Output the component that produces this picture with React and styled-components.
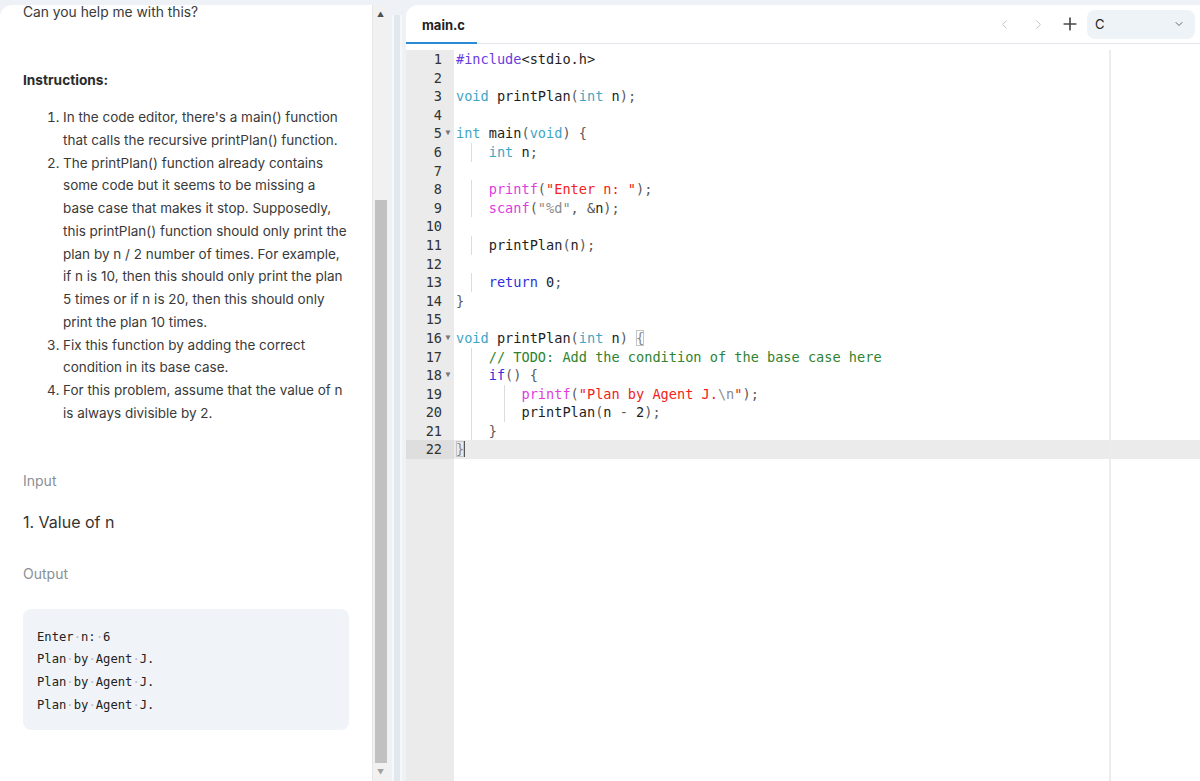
import styled, { createGlobalStyle } from "styled-components";
import { ChevronLeft, ChevronRight, ChevronDown, Plus } from "lucide-react";

const GlobalStyle = createGlobalStyle`
  html, body {
    margin: 0;
    padding: 0;
    background: #eef2f6;
    overflow: hidden;
  }
  * { box-sizing: border-box; }
`

const Page = styled.div`
  display: flex;
  height: 781px;
  padding-top: 5px;
  font-family: Inter, "Liberation Sans", sans-serif;
`

const LeftPane = styled.div`
  width: 388px;
  display: flex;
  background: #fff;
  border-top-left-radius: 12px;
  overflow: hidden;
`

const LeftContent = styled.div`
  flex: 1;
  padding: 0 23.5px 0 23px;
  color: #333;
  overflow: hidden;
`

const Question = styled.p`
  margin: -4px 0 0;
  font-size: 13.8px;
  line-height: 22px;
  color: #3a3a3a;
`

const Heading = styled.h3`
  margin: 46px 0 0;
  font-size: 13.7px;
  font-weight: 700;
  line-height: 22px;
  color: #2b2b2b;
`

const Steps = styled.ol`
  margin: 15px 0 0;
  padding-left: 40px;
  font-size: 13.5px;
  line-height: 22.77px;
  color: #3a3a3a;
`

const Label = styled.div`
  margin-top: ${p => p.$top}px;
  font-size: 14px;
  line-height: 20px;
  color: #8a8f96;
`

const InputItem = styled.div`
  margin-top: 20px;
  font-size: 16px;
  line-height: 22px;
  color: #333;
`

const OutputBox = styled.pre`
  margin: 25px 0 0;
  width: 326px;
  padding: 17px 14px 13px;
  background: #f0f4f8;
  border-radius: 8px;
  font-family: "DejaVu Sans Mono", monospace;
  font-size: 12.2px;
  line-height: 22.7px;
  color: #222;
`

const Dot = styled.span`
  color: #b8bcc2;
`

const ScrollBar = styled.div`
  width: 16px;
  display: flex;
  flex-direction: column;
  align-items: center;
  background: #f1f1f1;
  border-left: 1px solid #e6e6e6;
  color: #555;
  font-size: 7px;
`

const Arrow = styled.div`
  height: 18px;
  display: flex;
  align-items: center;
  justify-content: center;
  color: ${p => (p.$dim ? "#a0a0a0" : "#505050")};
`

const Thumb = styled.div`
  margin-top: 177px;
  width: 12px;
  height: 563px;
  background: #c1c1c1;
`

const Divider = styled.div`
  width: 18px;
  display: flex;
  justify-content: center;
  padding-top: 10px;
`

const Strip = styled.div`
  width: 10px;
  background: #e1e9ee;
  border-left: 2px solid #f6f8fa;
  border-right: 2px solid #f6f8fa;
`

const Editor = styled.div`
  flex: 1;
  display: flex;
  flex-direction: column;
  background: #fff;
  border-top-left-radius: 12px;
  overflow: hidden;
`

const TabBar = styled.div`
  height: 39px;
  display: flex;
  align-items: stretch;
  border-bottom: 1px solid #e2e6ea;
  flex-shrink: 0;
`

const Tab = styled.div`
  width: 71px;
  display: flex;
  align-items: center;
  padding: 3px 0 0 16px;
  font-size: 13px;
  font-weight: 700;
  color: #222;
  border-bottom: 2px solid #2b8ad6;
  margin-bottom: -1px;
`

const Controls = styled.div`
  margin-left: auto;
  display: flex;
  align-items: center;
  padding-right: 5px;
`

const IconButton = styled.div`
  width: ${p => p.$w || 34}px;
  display: flex;
  justify-content: center;
  color: ${p => (p.$dim ? "#bfc5cc" : "#4a4a4a")};
`

const Select = styled.div`
  width: 108px;
  height: 29px;
  display: flex;
  align-items: center;
  justify-content: space-between;
  padding: 0 10px 0 8px;
  border-radius: 8px;
  background: #eef3f8;
  font-size: 13px;
  color: #222;
  margin-left: 2px;
`

const CodeArea = styled.div`
  flex: 1;
  display: flex;
  flex-direction: column;
  position: relative;
  padding-top: 6px;
  font-family: "DejaVu Sans Mono", monospace;
  font-size: 13.6px;
`

const PrintMargin = styled.div`
  position: absolute;
  top: 6px;
  bottom: 0;
  left: 703px;
  width: 2px;
  background: #ececec;
`

const Row = styled.div`
  display: flex;
  height: 18.6px;
  line-height: 18.6px;
  background: ${p => (p.$active ? "#ebebeb" : "transparent")};
`

const GutterCell = styled.div`
  width: 48px;
  flex-shrink: 0;
  display: flex;
  justify-content: flex-end;
  background: ${p => (p.$active ? "#dedede" : "#ebebeb")};
  color: #333;
`

const LineNo = styled.span`
  width: 36px;
  text-align: right;
`

const Fold = styled.span`
  width: 12px;
  font-size: 8px;
  text-align: center;
  color: #777;
`

const CodeCell = styled.div`
  padding-left: 2px;
  white-space: pre;
  color: #1e1e1e;
  position: relative;
  z-index: 1;
`

const Indent = styled.span`
  display: inline-block;
  width: 4ch;
  height: 18.6px;
  vertical-align: top;
  background: linear-gradient(to right, transparent calc(2ch - 1px), #dcdcdc calc(2ch - 1px), #dcdcdc 2ch, transparent 2ch);
`

const colors = {
  pre: "#6a3de0",
  type: "#3fa6c6",
  kw: "#2f2fe0",
  fn: "#e03ce0",
  str: "#f2231c",
  fmt: "#8c8c8c",
  cm: "#2f8330",
  p: "#5a5a5a",
  id: "#1e1e1e",
}

const Tok = styled.span`
  color: ${p => colors[p.$k] || "#1e1e1e"};
`

const Brace = styled.span`
  color: #888;
  outline: 1px solid #c4c4c4;
  outline-offset: -1px;
`

const Cursor = styled.span`
  display: inline-block;
  width: 1px;
  height: 16px;
  vertical-align: -3px;
  background: #555;
`

const Filler = styled.div`
  flex: 1;
  display: flex;
`

const FillGutter = styled.div`
  width: 48px;
  background: #ebebeb;
`

const t = (k, s) => ({ k, s })

const lines = [
  { toks: [t("pre", "#include"), t("id", "<stdio.h>")] },
  { toks: [] },
  { toks: [t("type", "void"), t("id", " printPlan"), t("p", "("), t("type", "int"), t("id", " n"), t("p", ");")] },
  { toks: [] },
  { fold: true, toks: [t("type", "int"), t("id", " main"), t("p", "("), t("type", "void"), t("p", ") {")] },
  { ind: 1, toks: [t("type", "int"), t("id", " n"), t("p", ";")] },
  { toks: [] },
  { ind: 1, toks: [t("fn", "printf"), t("p", "("), t("str", "\"Enter n: \""), t("p", ");")] },
  { ind: 1, toks: [t("fn", "scanf"), t("p", "("), t("fmt", "\"%d\""), t("p", ", &"), t("id", "n"), t("p", ");")] },
  { toks: [] },
  { ind: 1, toks: [t("id", "printPlan"), t("p", "("), t("id", "n"), t("p", ");")] },
  { toks: [] },
  { ind: 1, toks: [t("kw", "return"), t("id", " 0"), t("p", ";")] },
  { toks: [t("p", "}")] },
  { toks: [] },
  { fold: true, brace: "open", toks: [t("type", "void"), t("id", " printPlan"), t("p", "("), t("type", "int"), t("id", " n"), t("p", ") ")] },
  { ind: 1, toks: [t("cm", "// TODO: Add the condition of the base case here")] },
  { ind: 1, fold: true, toks: [t("kw", "if"), t("p", "() {")] },
  { ind: 2, toks: [t("fn", "printf"), t("p", "("), t("str", "\"Plan by Agent J."), t("fmt", "\\n"), t("str", "\""), t("p", ");")] },
  { ind: 2, toks: [t("id", "printPlan"), t("p", "("), t("id", "n"), t("p", " - "), t("id", "2"), t("p", ");")] },
  { ind: 1, toks: [t("p", "}")] },
  { active: true, brace: "close", toks: [] },
]

const steps = [
  "In the code editor, there's a main() function that calls the recursive printPlan() function.",
  "The printPlan() function already contains some code but it seems to be missing a base case that makes it stop. Supposedly, this printPlan() function should only print the plan by n / 2 number of times. For example, if n is 10, then this should only print the plan 5 times or if n is 20, then this should only print the plan 10 times.",
  "Fix this function by adding the correct condition in its base case.",
  "For this problem, assume that the value of n is always divisible by 2.",
]

const outputLines = [
  ["Enter", "n:", "6"],
  ["Plan", "by", "Agent", "J."],
  ["Plan", "by", "Agent", "J."],
  ["Plan", "by", "Agent", "J."],
]

function OutLine({ words }) {
  return (
    <div>
      {words.map((w, i) => (
        <span key={i}>
          {i > 0 && <Dot>·</Dot>}
          {w}
        </span>
      ))}
    </div>
  )
}

function CodeLine({ line, n }) {
  const indents = []
  for (let i = 0; i < (line.ind || 0); i++) indents.push(<Indent key={i} />)
  return (
    <Row $active={line.active}>
      <GutterCell $active={line.active}>
        <LineNo>{n}</LineNo>
        <Fold>{line.fold ? "▼" : ""}</Fold>
      </GutterCell>
      <CodeCell>
        {indents}
        {line.toks.map((tk, i) => (
          <Tok key={i} $k={tk.k}>{tk.s}</Tok>
        ))}
        {line.brace === "open" && <Brace>{"{"}</Brace>}
        {line.brace === "close" && (
          <>
            <Brace>{"}"}</Brace>
            <Cursor />
          </>
        )}
      </CodeCell>
    </Row>
  )
}

export default function App() {
  return (
    <>
      <GlobalStyle />
      <Page>
        <LeftPane>
          <LeftContent>
            <Question>Can you help me with this?</Question>
            <Heading>Instructions:</Heading>
            <Steps>
              {steps.map((s, i) => (
                <li key={i}>{s}</li>
              ))}
            </Steps>
            <Label $top={46}>Input</Label>
            <InputItem>1. Value of n</InputItem>
            <Label $top={31}>Output</Label>
            <OutputBox>
              {outputLines.map((w, i) => (
                <OutLine key={i} words={w} />
              ))}
            </OutputBox>
          </LeftContent>
          <ScrollBar>
            <Arrow>▲</Arrow>
            <Thumb />
            <Arrow $dim>▼</Arrow>
          </ScrollBar>
        </LeftPane>
        <Divider>
          <Strip />
        </Divider>
        <Editor>
          <TabBar>
            <Tab>main.c</Tab>
            <Controls>
              <IconButton $dim><ChevronLeft size={15} strokeWidth={1.6} /></IconButton>
              <IconButton $dim><ChevronRight size={15} strokeWidth={1.6} /></IconButton>
              <IconButton $w={30}><Plus size={20} strokeWidth={2} /></IconButton>
              <Select>
                <span>C</span>
                <ChevronDown size={12} strokeWidth={2} color="#666" />
              </Select>
            </Controls>
          </TabBar>
          <CodeArea>
            <PrintMargin />
            {lines.map((l, i) => (
              <CodeLine key={i} line={l} n={i + 1} />
            ))}
            <Filler>
              <FillGutter />
            </Filler>
          </CodeArea>
        </Editor>
      </Page>
    </>
  )
}
